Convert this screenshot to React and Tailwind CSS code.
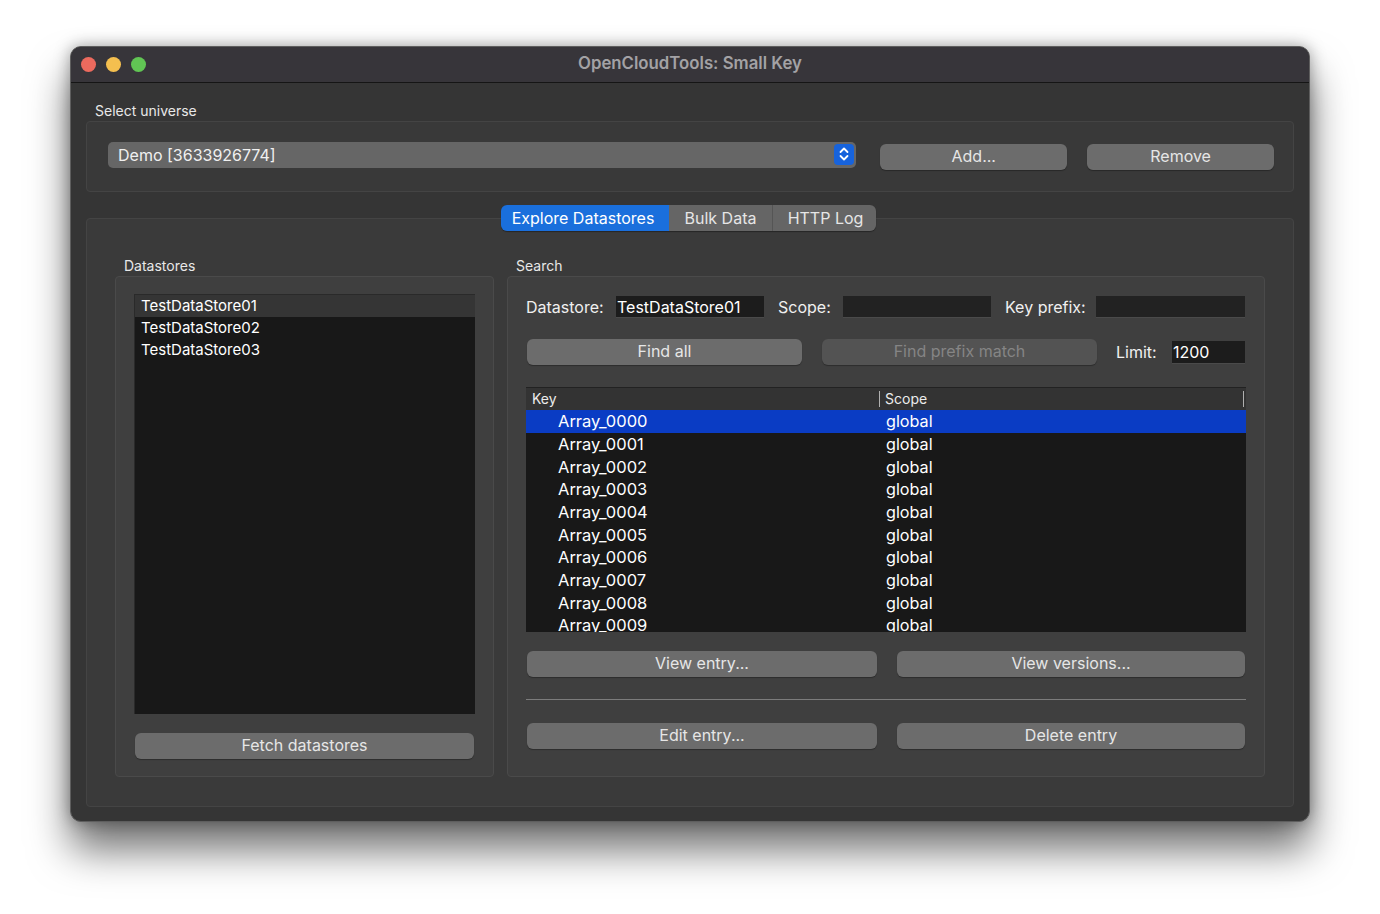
import React from 'react';

const rows = ['0000', '0001', '0002', '0003', '0004', '0005', '0006', '0007', '0008', '0009'];

function Btn({ className = '', disabled, children }) {
  return (
    <button
      className={`h-[26px] rounded-[6px] text-[16px] leading-[24px] pb-[2px] shadow-[0_1px_1px_rgba(0,0,0,0.3)] ${
        disabled ? 'bg-[#535353] text-[#858585]' : 'bg-[#6c6c6c] text-[#e6e6e6]'
      } ${className}`}
    >
      {children}
    </button>
  );
}

function Field({ className = '', children }) {
  return (
    <div className={`h-[22px] text-white text-[16px] leading-[23px] pl-px border-b border-[#4a4a4a] ${className}`}>
      {children}
    </div>
  );
}

export default function App() {
  return (
    <div className="w-[1380px] h-[914px] bg-white pt-[46px] pl-[70px] font-['Inter','Liberation_Sans',sans-serif] overflow-hidden">
      <div className="w-[1240px] h-[776px] rounded-[11px] overflow-hidden bg-[#353535] border border-[#5e5e5e] shadow-[0_28px_40px_rgba(0,0,0,0.55),0_0_16px_rgba(0,0,0,0.35)]">
        {/* title bar */}
        <div className="relative h-[36px] bg-[#37353a] border-b border-[#151515] flex items-center justify-center">
          <div className="absolute left-[10px] top-[10px] flex gap-[10px]">
            <div className="w-[15px] h-[15px] rounded-full bg-[#ec6a5e]" />
            <div className="w-[15px] h-[15px] rounded-full bg-[#f4bf4f]" />
            <div className="w-[15px] h-[15px] rounded-full bg-[#61c554]" />
          </div>
          <span className="text-[16.8px] leading-[20px] -mt-[3px] font-semibold text-[#a3a2a5]">OpenCloudTools: Small Key</span>
        </div>

        <div className="px-[15px]">
          {/* universe */}
          <div className="pl-[9px] pt-[19px] h-[38px] text-[14px] leading-[17px] text-[#e8e8e8]">Select universe</div>
          <div className="h-[71px] rounded-[4px] bg-[#393939] border border-[#444444] pl-[21px] pr-[19px] flex items-center">
            <div className="relative w-[749px] h-[26px] -mt-[4px] rounded-[5px] bg-[#666666] pl-[10px] text-[16px] leading-[26px] text-[#f0f0f0]">
              Demo [3633926774]
              <div className="absolute right-[2px] top-[2px] w-[20px] h-[21px] rounded-[4px] bg-[#1763dc] flex items-center justify-center">
                <svg width="12" height="16" viewBox="0 0 12 16" fill="none" stroke="white" strokeWidth="1.8" strokeLinecap="round" strokeLinejoin="round">
                  <path d="M2.5 6 6 2.5 9.5 6" />
                  <path d="M2.5 10 6 13.5 9.5 10" />
                </svg>
              </div>
            </div>
            <Btn className="w-[187px] ml-[24px]">Add...</Btn>
            <Btn className="w-[187px] ml-[20px]">Remove</Btn>
          </div>

          {/* tab pane */}
          <div className="relative mt-[26px] h-[589px] rounded-[4px] bg-[#3a3a3a] border border-[#444444] pt-[36px] pl-[28px]">
            <div className="absolute left-[414px] -top-[14px] flex h-[26px] rounded-[6px] overflow-hidden text-[16px] leading-[26px] shadow-[0_1px_1px_rgba(0,0,0,0.35)]">
              <div className="w-[168px] pr-[4px] text-center bg-[#1a6fdc] text-white">Explore Datastores</div>
              <div className="w-[104px] text-center bg-[#656565] text-[#e6e6e6] border-r border-[#555555]">Bulk Data</div>
              <div className="w-[103px] pl-[2px] text-center bg-[#656565] text-[#e6e6e6]">HTTP Log</div>
            </div>

            <div className="flex gap-[13px]">
              {/* datastores */}
              <div className="w-[379px]">
                <div className="pl-[9px] h-[21px] text-[14px] leading-[22px] text-[#e8e8e8]">Datastores</div>
                <div className="h-[501px] rounded-[4px] bg-[#3f3f3f] border border-[#4a4a4a] pt-[17px] pl-[18px]">
                  <div className="w-[341px] h-[420px] bg-[#181818] border-t border-l border-[#2a2a2a] text-[15px] leading-[21.5px] text-white">
                    <div className="h-[22px] bg-[#353535] pl-[6px]">TestDataStore01</div>
                    <div className="h-[21.5px] pl-[6px]">TestDataStore02</div>
                    <div className="h-[21.5px] pl-[6px]">TestDataStore03</div>
                  </div>
                  <Btn className="w-[339px] ml-px mt-[19px]">Fetch datastores</Btn>
                </div>
              </div>

              {/* search */}
              <div className="w-[758px]">
                <div className="pl-[9px] h-[21px] text-[14px] leading-[22px] text-[#e8e8e8]">Search</div>
                <div className="h-[501px] rounded-[4px] bg-[#3f3f3f] border border-[#4a4a4a] pt-[19px] pl-[18px]">
                  <div className="flex items-center h-[22px] text-[16px] text-[#f0f0f0]">
                    <span className="w-[90px]">Datastore:</span>
                    <Field className="w-[148px] bg-[#1c1c1c]">TestDataStore01</Field>
                    <span className="w-[65px] ml-[14px]">Scope:</span>
                    <Field className="w-[148px] bg-[#222222]" />
                    <span className="w-[91px] ml-[14px]">Key prefix:</span>
                    <Field className="w-[149px] bg-[#222222]" />
                  </div>

                  <div className="flex items-center mt-[21px] ml-px h-[26px]">
                    <Btn className="w-[275px]">Find all</Btn>
                    <Btn disabled className="w-[275px] ml-[20px]">Find prefix match</Btn>
                    <span className="w-[56px] ml-[19px] text-[16px] text-[#f0f0f0]">Limit:</span>
                    <Field className="w-[73px] h-[23px] bg-[#1c1c1c]">1200</Field>
                  </div>

                  <div className="relative w-[720px] h-[245px] mt-[22px] bg-[#181818] overflow-hidden border-t border-[#222222]">
                    <div className="relative h-[22.4px] bg-[#333333] text-[14px] leading-[21px] text-[#ececec]">
                      <span className="absolute left-[6px]">Key</span>
                      <span className="absolute left-[353px] top-[3px] w-px h-[16px] bg-[#b0b0b0]" />
                      <span className="absolute left-[359px]">Scope</span>
                      <span className="absolute left-[717px] top-[3px] w-px h-[16px] bg-[#b0b0b0]" />
                    </div>
                    {rows.map((n, i) => (
                      <div
                        key={n}
                        className={`flex h-[22.67px] text-[16.5px] leading-[23px] text-white ${i === 0 ? 'bg-[#0a3cc4]' : ''}`}
                      >
                        <span className="w-[360px] pl-[32px]">Array_{n}</span>
                        <span className="text-[16.2px]">global</span>
                      </div>
                    ))}
                  </div>

                  <div className="flex gap-[20px] mt-[19px] ml-px">
                    <Btn className="w-[350px]">View entry...</Btn>
                    <Btn className="w-[348px]">View versions...</Btn>
                  </div>
                  <div className="w-[720px] h-px bg-[#7c7c7c] mt-[22px]" />
                  <div className="flex gap-[20px] mt-[23px] ml-px">
                    <Btn className="w-[350px]">Edit entry...</Btn>
                    <Btn className="w-[348px]">Delete entry</Btn>
                  </div>
                </div>
              </div>
            </div>
          </div>
        </div>
      </div>
    </div>
  );
}
